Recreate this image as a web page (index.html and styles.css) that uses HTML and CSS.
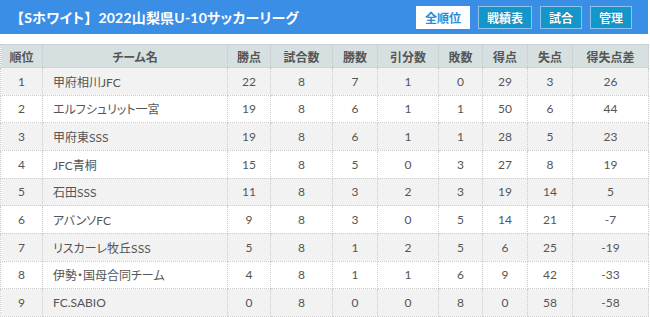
FILE: index.html
```html
<!DOCTYPE html>
<html lang="ja">
<head>
<meta charset="utf-8">
<link rel="stylesheet" href="styles.css">
</head>
<body>
<div class="wrap">
  <header class="bar">
    <h1 class="title"><span class="bracket">【</span>Sホワイト<span class="bracket">】</span>2022山梨県U-10サッカーリーグ</h1>
    <nav class="nav">
      <a class="btn btn-active">全順位</a>
      <a class="btn">戦績表</a>
      <a class="btn">試合</a>
      <a class="btn">管理</a>
    </nav>
  </header>
  <table class="standings">
    <colgroup>
      <col class="c-rank"><col class="c-team"><col class="c-pt"><col class="c-gp"><col class="c-w"><col class="c-d"><col class="c-l"><col class="c-gf"><col class="c-ga"><col class="c-gd">
    </colgroup>
    <thead>
      <tr><th>順位</th><th>チーム名</th><th>勝点</th><th>試合数</th><th>勝数</th><th>引分数</th><th>敗数</th><th>得点</th><th>失点</th><th>得失点差</th></tr>
    </thead>
    <tbody>
      <tr><td>1</td><td class="team">甲府相川JFC</td><td>22</td><td>8</td><td>7</td><td>1</td><td>0</td><td>29</td><td>3</td><td>26</td></tr>
      <tr><td>2</td><td class="team">エルフシュリット一宮</td><td>19</td><td>8</td><td>6</td><td>1</td><td>1</td><td>50</td><td>6</td><td>44</td></tr>
      <tr><td>3</td><td class="team">甲府東SSS</td><td>19</td><td>8</td><td>6</td><td>1</td><td>1</td><td>28</td><td>5</td><td>23</td></tr>
      <tr><td>4</td><td class="team">JFC青桐</td><td>15</td><td>8</td><td>5</td><td>0</td><td>3</td><td>27</td><td>8</td><td>19</td></tr>
      <tr><td>5</td><td class="team">石田SSS</td><td>11</td><td>8</td><td>3</td><td>2</td><td>3</td><td>19</td><td>14</td><td>5</td></tr>
      <tr><td>6</td><td class="team">アバンソFC</td><td>9</td><td>8</td><td>3</td><td>0</td><td>5</td><td>14</td><td>21</td><td>-7</td></tr>
      <tr><td>7</td><td class="team">リスカーレ牧丘SSS</td><td>5</td><td>8</td><td>1</td><td>2</td><td>5</td><td>6</td><td>25</td><td>-19</td></tr>
      <tr><td>8</td><td class="team">伊勢・国母合同チーム</td><td>4</td><td>8</td><td>1</td><td>1</td><td>6</td><td>9</td><td>42</td><td>-33</td></tr>
      <tr><td>9</td><td class="team">FC.SABIO</td><td>0</td><td>8</td><td>0</td><td>0</td><td>8</td><td>0</td><td>58</td><td>-58</td></tr>
    </tbody>
  </table>
</div>
</body>
</html>
```
FILE: styles.css
```css
html, body {
  margin: 0;
  padding: 0;
  background: #ffffff;
}
body {
  font-family: Lato, "Noto Sans CJK JP", sans-serif;
  font-feature-settings: "palt";
  color: #555555;
}
.wrap {
  width: 648px;
}
.bar {
  height: 34px;
  background: #3a8ee6;
  display: flex;
  align-items: center;
  justify-content: space-between;
  padding: 0 16px 0 10px;
  box-sizing: border-box;
}
.title {
  margin: 0;
  font-size: 14px;
  font-weight: bold;
  color: #ffffff;
  letter-spacing: 0.2px;
}
.bracket {
  font-feature-settings: normal;
}
.nav {
  display: flex;
  gap: 8px;
  margin-top: 1px;
}
.btn {
  display: flex;
  align-items: center;
  height: 23px;
  box-sizing: border-box;
  padding: 0 8px;
  font-size: 12px;
  font-weight: bold;
  color: #ffffff;
  background: #1396c9;
  border: 1px solid #8ec3ec;
  text-shadow: 0 0 1px rgba(0, 0, 0, 0.3);
}
.btn-active {
  background: #ffffff;
  color: #2a8ad8;
  border-color: #ffffff;
  text-shadow: none;
}
.standings {
  margin-top: 10px;
  width: 648px;
  border-collapse: collapse;
  table-layout: fixed;
  font-size: 12px;
}
.c-rank { width: 42px; }
.c-team { width: 185px; }
.c-pt { width: 43px; }
.c-gp { width: 62px; }
.c-w { width: 45px; }
.c-d { width: 61px; }
.c-l { width: 44px; }
.c-gf { width: 45px; }
.c-ga { width: 45px; }
.c-gd { width: 76px; }
.standings th {
  height: 22px;
  padding: 0;
  background: #d6e0e0;
  color: #555555;
  font-weight: bold;
  text-align: center;
  border-top: 1px solid #c9d3d3;
  border-left: 1px dotted #bfc8c8;
  border-right: 1px dotted #bfc8c8;
}
.standings td {
  height: 26.67px;
  padding: 0;
  text-align: center;
  border: 1px dotted #cccccc;
}
.standings td.team {
  text-align: left;
  padding-left: 10px;
}
.standings tbody tr:nth-child(odd) td {
  background: #f2f2f2;
}
.standings tbody tr:nth-child(even) td {
  background: #ffffff;
}
```
